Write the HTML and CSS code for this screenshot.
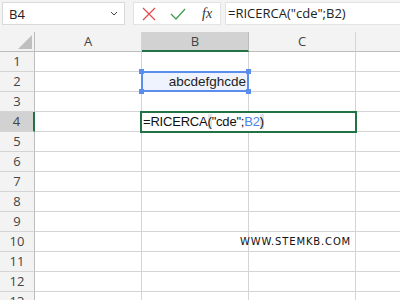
FILE: index.html
```html
<!DOCTYPE html>
<html lang="it">
<head>
    <meta charset="UTF-8">
    <title>Excel RICERCA</title>
    <link rel="stylesheet" href="styles.css">
</head>
<body>
    <div class="toolbar">
        <div class="name-box">
            <span>B4</span>
            <svg class="chev" width="8" height="5" viewBox="0 0 8 5"><path d="M1 1 L4 4 L7 1" fill="none" stroke="#444" stroke-width="1"/></svg>
        </div>
        <div class="fx-box">
            <svg width="14" height="14" viewBox="0 0 14 14"><path d="M1 1 L13 13 M13 1 L1 13" stroke="#e2474a" stroke-width="1.2" fill="none"/></svg>
            <svg width="16" height="12" viewBox="0 0 16 12"><path d="M1 6 L6 11 L15 1" stroke="#3fa04f" stroke-width="1.3" fill="none"/></svg>
            <span class="fx">fx</span>
        </div>
        <div class="formula-box">=RICERCA("cde";B2)</div>
    </div>

    <div class="sheet">
        <div class="row head">
            <div class="corner"><span class="tri"></span></div>
            <div class="col">A</div>
            <div class="col sel">B</div>
            <div class="col">C</div>
            <div class="col last"></div>
        </div>
        <div class="row"><div class="rh">1</div><div class="cell"></div><div class="cell"></div><div class="cell"></div><div class="cell"></div></div>
        <div class="row"><div class="rh">2</div><div class="cell"></div><div class="cell"></div><div class="cell"></div><div class="cell"></div></div>
        <div class="row"><div class="rh">3</div><div class="cell"></div><div class="cell"></div><div class="cell"></div><div class="cell"></div></div>
        <div class="row"><div class="rh sel">4</div><div class="cell"></div><div class="cell"></div><div class="cell"></div><div class="cell"></div></div>
        <div class="row"><div class="rh">5</div><div class="cell"></div><div class="cell"></div><div class="cell"></div><div class="cell"></div></div>
        <div class="row"><div class="rh">6</div><div class="cell"></div><div class="cell"></div><div class="cell"></div><div class="cell"></div></div>
        <div class="row"><div class="rh">7</div><div class="cell"></div><div class="cell"></div><div class="cell"></div><div class="cell"></div></div>
        <div class="row"><div class="rh">8</div><div class="cell"></div><div class="cell"></div><div class="cell"></div><div class="cell"></div></div>
        <div class="row"><div class="rh">9</div><div class="cell"></div><div class="cell"></div><div class="cell"></div><div class="cell"></div></div>
        <div class="row"><div class="rh">10</div><div class="cell"></div><div class="cell"></div><div class="cell"></div><div class="cell"></div></div>
        <div class="row"><div class="rh">11</div><div class="cell"></div><div class="cell"></div><div class="cell"></div><div class="cell"></div></div>
        <div class="row"><div class="rh">12</div><div class="cell"></div><div class="cell"></div><div class="cell"></div><div class="cell"></div></div>
        <div class="row"><div class="rh">13</div><div class="cell"></div><div class="cell"></div><div class="cell"></div><div class="cell"></div></div>

        <div class="ref-cell">
            abcdefghcde
            <span class="h h1"></span><span class="h h2"></span><span class="h h3"></span><span class="h h4"></span>
        </div>
        <div class="edit-cell">=RICERCA<span class="par">(</span>"cde";<span class="ref">B2</span><span class="par">)</span></div>
        <div class="watermark">WWW.STEMKB.COM</div>
    </div>
</body>
</html>
```

FILE: styles.css
```css
* {
    margin: 0;
    box-sizing: border-box;
}

body {
    width: 400px;
    height: 300px;
    overflow: hidden;
    background: #ffffff;
    font-family: "Open Sans", "Noto Sans", sans-serif;
    color: #333;
}

.toolbar {
    height: 32px;
    background: #f3f3f3;
    display: flex;
    padding: 2px 0 0 2px;
    gap: 8px;
}

.name-box {
    width: 123px;
    height: 23px;
    background: #fff;
    border: 1px solid #d9d9d9;
    display: flex;
    align-items: center;
    justify-content: space-between;
    padding: 0 6px 0 6px;
    font-size: 13px;
    color: #222;
}

.fx-box {
    width: 88px;
    height: 23px;
    background: #fff;
    border: 1px solid #e3e3e3;
    display: flex;
    align-items: center;
    padding-left: 8px;
    gap: 14px;
}

.fx {
    font-family: "Liberation Serif", serif;
    font-style: italic;
    font-size: 14px;
    color: #333;
    margin-left: 2px;
}

.formula-box {
    flex: 1;
    height: 23px;
    background: #fff;
    border: 1px solid #e3e3e3;
    border-right: none;
    margin-left: -4px;
    padding-left: 2px;
    font-size: 13px;
    line-height: 21px;
    color: #222;
}

.sheet {
    position: relative;
}

.row {
    display: flex;
    height: 20px;
}

.row > div {
    border-right: 1px solid #d4d4d4;
    border-bottom: 1px solid #d4d4d4;
    flex: none;
}

.corner,
.rh {
    width: 35px;
}

.col,
.cell {
    width: 107px;
}

.row > .last,
.row > div:last-child {
    width: 60px;
}

.head > div {
    background: #f3f3f3;
    border-right-color: #d4d4d4;
    border-bottom: 1px solid #bdbdbd;
    text-align: center;
    font-size: 13px;
    line-height: 19px;
    color: #444;
}

.head > .corner {
    border-right: 1px solid #bdbdbd;
    position: relative;
}

.tri {
    position: absolute;
    right: 2px;
    bottom: 2px;
    width: 0;
    height: 0;
    border-left: 14px solid transparent;
    border-bottom: 14px solid #bfbfbf;
}

.head > .sel {
    background: #d2d2d2;
    border-bottom: 2px solid #217346;
    border-right-color: #bdbdbd;
}

.rh {
    background: #f3f3f3;
    text-align: center;
    font-size: 13px;
    line-height: 19px;
    color: #444;
}

.row > .rh {
    border-right: 1px solid #bdbdbd;
}

.row > .rh.sel {
    background: #d2d2d2;
    border-right: 2px solid #217346;
}

.ref-cell {
    position: absolute;
    left: 141px;
    top: 39px;
    width: 108px;
    height: 21px;
    border: 2px solid #5b8ded;
    background: #eef3fd;
    text-align: right;
    padding-right: 1px;
    font-family: "Liberation Sans", sans-serif;
    font-size: 13.5px;
    line-height: 17px;
    color: #222;
}

.h {
    position: absolute;
    width: 5px;
    height: 5px;
    background: #5b8ded;
}

.h1 { left: -4px; top: -4px; }
.h2 { right: -4px; top: -4px; }
.h3 { left: -4px; bottom: -4px; }
.h4 { right: -4px; bottom: -4px; }

.edit-cell {
    position: absolute;
    left: 140px;
    top: 79px;
    width: 217px;
    height: 22px;
    border: 2px solid #217346;
    background: #fff;
    padding-left: 1px;
    font-family: "Liberation Sans", sans-serif;
    font-size: 13px;
    letter-spacing: -0.2px;
    line-height: 18px;
    color: #111;
}

.par {
    background: #e4e4e4;
}

.ref {
    color: #4a86e8;
}

.watermark {
    position: absolute;
    left: 240px;
    top: 203px;
    font-family: "DejaVu Sans", sans-serif;
    font-size: 10px;
    letter-spacing: 0.85px;
    color: #111;
    line-height: 14px;
}
```
